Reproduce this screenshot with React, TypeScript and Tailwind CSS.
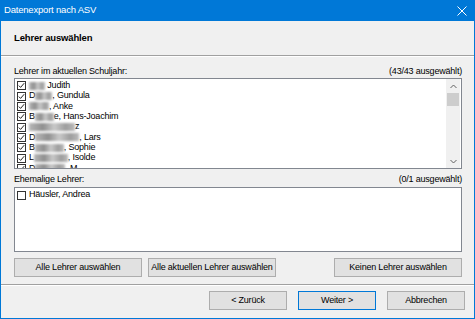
import React from 'react';

const font = { fontFamily: '"Liberation Sans", Arial, sans-serif' };

type Teacher = { pre?: string; blur: number; post: string; checked: boolean };

const current: Teacher[] = [
  { blur: 16, post: '\u00a0Judith', checked: true },
  { pre: 'D', blur: 17, post: ', Gundula', checked: true },
  { blur: 20, post: ', Anke', checked: true },
  { pre: 'B', blur: 19, post: 'e, Hans-Joachim', checked: true },
  { blur: 46, post: 'z', checked: true },
  { pre: 'D', blur: 44, post: ', Lars', checked: true },
  { pre: 'B', blur: 29, post: ', Sophie', checked: true },
  { pre: 'L', blur: 34, post: ', Isolde', checked: true },
  { pre: 'D', blur: 30, post: ', M', checked: true },
];

function CheckBox({ checked }: { checked: boolean }) {
  return (
    <span className="w-[9px] h-[9px] border border-[#333333] bg-white flex items-center justify-center shrink-0">
      {checked && (
        <svg width="7" height="7" viewBox="0 0 7 7">
          <path d="M0.8 3.6 L2.6 5.4 L6.2 1.2" fill="none" stroke="#222" strokeWidth="1" />
        </svg>
      )}
    </span>
  );
}

function Row({ t }: { t: Teacher }) {
  return (
    <div className="flex items-center h-[10.35px] pl-[2px]">
      <CheckBox checked={t.checked} />
      <span className="ml-[3px] flex items-center whitespace-nowrap">
        {t.pre && <span>{t.pre}</span>}
        {t.blur > 0 && (
          <span
            className="inline-block h-[8px] bg-[linear-gradient(90deg,#b8b8b8,#8f8f8f_30%,#c9c9c9_55%,#9d9d9d_80%,#bcbcbc)] blur-[0.8px]"
            style={{ width: t.blur }}
          />
        )}
        <span>{t.post}</span>
      </span>
    </div>
  );
}

function Button({ label, w, primary }: { label: string; w: string; primary?: boolean }) {
  return (
    <button
      className={`${w} h-[19px] bg-[#e1e1e1] border ${
        primary ? 'border-[#0078d7]' : 'border-[#adadad]'
      } flex items-center justify-center text-[9px] tracking-[-0.2px] text-black`}
    >
      {label}
    </button>
  );
}

export default function App() {
  return (
    <div
      className="w-[475px] h-[319px] flex flex-col bg-[#f0f0f0] border-x border-b border-[#0078d7] text-black overflow-hidden"
      style={font}
    >
      {/* Title bar */}
      <div className="h-[21px] bg-[#0078d7] flex items-center justify-between pl-[3px] pr-[7px] shrink-0">
        <span className="text-white text-[9.5px] tracking-[-0.2px]">Datenexport nach ASV</span>
        <svg width="10" height="10" viewBox="0 0 10 10">
          <path d="M0.5 0.5 L9.5 9.5 M9.5 0.5 L0.5 9.5" stroke="white" strokeWidth="1" />
        </svg>
      </div>

      {/* Header */}
      <div className="h-[34px] flex items-center pl-[13px] shrink-0">
        <span className="font-bold text-[9.5px] tracking-[-0.15px]">Lehrer auswählen</span>
      </div>
      <div className="h-px bg-[#a0a0a0] shrink-0" />
      <div className="h-px bg-white shrink-0" />

      {/* Content */}
      <div className="flex flex-col pl-[13px] pr-[12px] text-[9px] tracking-[-0.2px]">
        <div className="mt-[10px] h-[10px] flex items-center justify-between">
          <span>Lehrer im aktuellen Schuljahr:</span>
          <span>(43/43 ausgewählt)</span>
        </div>
        <div className="mt-px h-[91px] border border-[#828790] bg-white flex overflow-hidden">
          <div className="flex-1 pt-[1.5px] overflow-hidden">
            {current.map((t, i) => (
              <Row key={i} t={t} />
            ))}
          </div>
          <div className="w-[14px] mr-px bg-[#f0f0f0] flex flex-col items-center">
            <div className="h-[14px] flex items-center justify-center">
              <svg width="7" height="5" viewBox="0 0 7 5">
                <path d="M0.5 4 L3.5 1 L6.5 4" fill="none" stroke="#606060" strokeWidth="1" />
              </svg>
            </div>
            <div className="w-[12px] h-[13px] bg-[#cdcdcd]" />
            <div className="flex-1" />
            <div className="h-[14px] flex items-center justify-center">
              <svg width="7" height="5" viewBox="0 0 7 5">
                <path d="M0.5 1 L3.5 4 L6.5 1" fill="none" stroke="#606060" strokeWidth="1" />
              </svg>
            </div>
          </div>
        </div>

        <div className="mt-[6px] h-[10px] flex items-center justify-between">
          <span>Ehemalige Lehrer:</span>
          <span>(0/1 ausgewählt)</span>
        </div>
        <div className="mt-[2px] h-[65px] border border-[#828790] bg-white pt-[2px]">
          <Row t={{ blur: 0, post: 'Häusler, Andrea', checked: false }} />
        </div>

        <div className="mt-[6px] flex">
          <Button label="Alle Lehrer auswählen" w="w-[128px]" />
          <div className="ml-[6px]">
            <Button label="Alle aktuellen Lehrer auswählen" w="w-[128px]" />
          </div>
          <div className="flex-1" />
          <Button label="Keinen Lehrer auswählen" w="w-[128px]" />
        </div>
      </div>

      <div className="mt-[7px] h-px bg-[#a0a0a0] shrink-0" />
      <div className="h-px bg-white shrink-0" />

      {/* Footer */}
      <div className="mt-[5px] flex justify-end gap-[11px] pr-[9px]">
        <Button label="< Zurück" w="w-[78px]" />
        <Button label="Weiter >" w="w-[78px]" primary />
        <Button label="Abbrechen" w="w-[78px]" />
      </div>
    </div>
  );
}
